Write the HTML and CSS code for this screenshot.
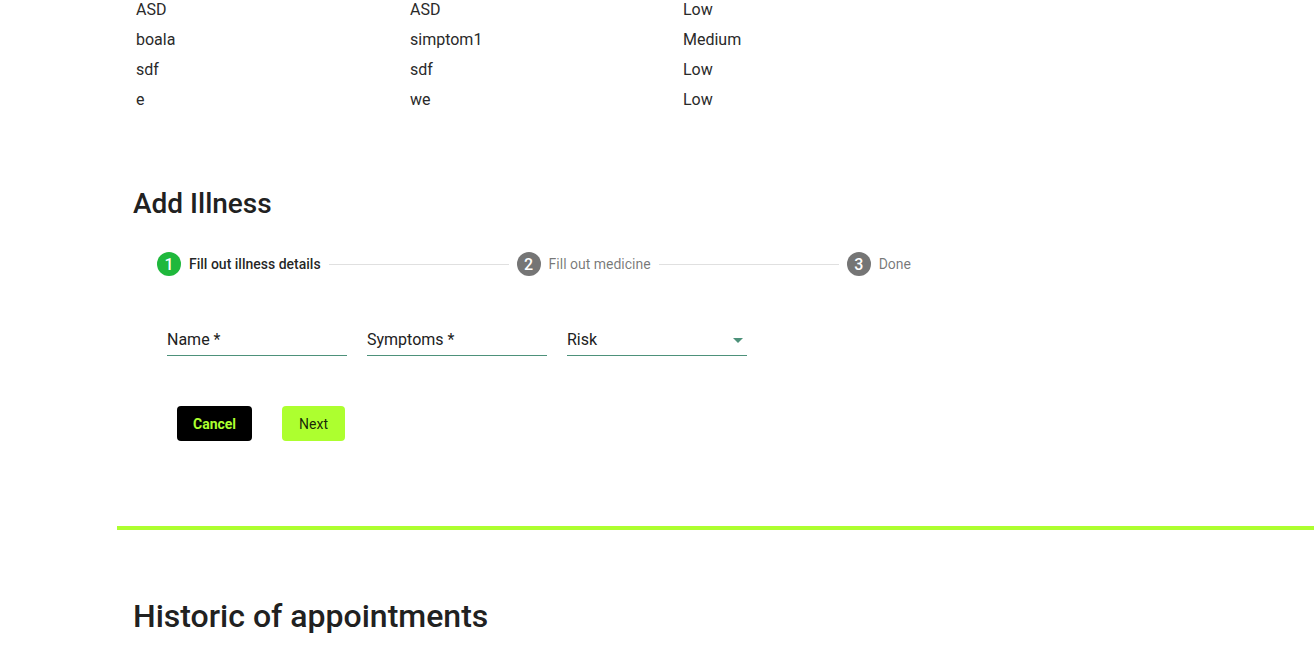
FILE: index.html
```html
<!DOCTYPE html>
<html>
<head>
<meta charset="utf-8">
<link rel="stylesheet" href="styles.css">
</head>
<body>
<div class="page">
  <main class="main">
    <section class="section">
      <div class="illness-table">
        <div class="row"><span>ASD</span><span>ASD</span><span>Low</span></div>
        <div class="row"><span>boala</span><span>simptom1</span><span>Medium</span></div>
        <div class="row"><span>sdf</span><span>sdf</span><span>Low</span></div>
        <div class="row"><span>e</span><span>we</span><span>Low</span></div>
      </div>

      <h2 class="title">Add Illness</h2>

      <div class="stepper">
        <div class="step active">
          <span class="step-icon">1</span>
          <span class="step-label">Fill out illness details</span>
        </div>
        <div class="step-line"></div>
        <div class="step">
          <span class="step-icon">2</span>
          <span class="step-label">Fill out medicine</span>
        </div>
        <div class="step-line"></div>
        <div class="step">
          <span class="step-icon">3</span>
          <span class="step-label">Done</span>
        </div>
      </div>

      <form class="form">
        <div class="fields">
          <div class="field"><span class="field-label">Name *</span></div>
          <div class="field"><span class="field-label">Symptoms *</span></div>
          <div class="field select"><span class="field-label">Risk</span><span class="arrow"></span></div>
        </div>
        <div class="actions">
          <button type="button" class="btn btn-cancel">Cancel</button>
          <button type="button" class="btn btn-next">Next</button>
        </div>
      </form>
    </section>

    <hr class="divider">

    <section class="section">
      <h2 class="title big">Historic of appointments</h2>
    </section>
  </main>
</div>
</body>
</html>
```

FILE: styles.css
```css
* { box-sizing: border-box; }

html, body {
  margin: 0;
  padding: 0;
  background: #fff;
  font-family: Roboto, "Noto Sans", Arial, sans-serif;
  color: rgba(0, 0, 0, 0.87);
  overflow: hidden;
}

.page {
  padding-left: 117px;
}

.main {
  display: flex;
  flex-direction: column;
}

.section {
  padding-left: 16px;
}

.illness-table {
  margin-top: -5px;
  padding-left: 3px;
  display: flex;
  flex-direction: column;
}

.row {
  display: grid;
  grid-template-columns: 274px 273px 200px;
  height: 30px;
  line-height: 30px;
  font-size: 16px;
  color: #2a2a2a;
}

.title {
  margin: 73px 0 0 0;
  font-size: 28px;
  line-height: 32px;
  font-weight: 500;
  color: #212121;
}

.title.big {
  margin-top: 67px;
  font-size: 32px;
  line-height: 38px;
}

.stepper {
  margin-top: 8px;
  width: 802px;
  height: 72px;
  display: flex;
  align-items: center;
}

.step {
  display: flex;
  align-items: center;
  padding: 0 24px;
  height: 72px;
}

.step-icon {
  width: 24px;
  height: 24px;
  border-radius: 50%;
  background: #757575;
  color: #fff;
  font-size: 16px;
  font-weight: 500;
  display: flex;
  align-items: center;
  justify-content: center;
  margin-right: 8px;
}

.step.active .step-icon {
  background: #1fb83c;
}

.step-label {
  font-size: 14px;
  color: rgba(0, 0, 0, 0.54);
}

.step.active .step-label {
  color: rgba(0, 0, 0, 0.87);
  font-weight: 500;
}

.step-line {
  flex: 1;
  height: 1px;
  background: #e0e0e0;
  margin: 0 -16px;
}

.form {
  padding-left: 34px;
}

.fields {
  margin-top: 30px;
  display: flex;
  gap: 20px;
}

.field {
  width: 180px;
  height: 26px;
  border-bottom: 1px solid #4d917a;
  display: flex;
  align-items: flex-start;
  justify-content: space-between;
  font-size: 16px;
  line-height: 20px;
  color: #212121;
}

.arrow {
  width: 0;
  height: 0;
  border-left: 5px solid transparent;
  border-right: 5px solid transparent;
  border-top: 5px solid #4d917a;
  margin: 8px 4px 0 0;
}

.actions {
  margin-top: 50px;
  padding-left: 10px;
  display: flex;
  gap: 30px;
}

.btn {
  height: 35px;
  border: none;
  border-radius: 4px;
  padding: 0 16px;
  font-family: Roboto, Arial, sans-serif;
  font-size: 14px;
  cursor: pointer;
}

.btn-cancel {
  background: #000;
  color: #adff2f;
  font-weight: 700;
}

.btn-next {
  background: #adff2f;
  color: rgba(0, 0, 0, 0.87);
  font-weight: 400;
  padding: 0 17px;
}

.divider {
  margin: 85px 0 0 0;
  border: none;
  height: 4px;
  background: #adff2f;
}
```
